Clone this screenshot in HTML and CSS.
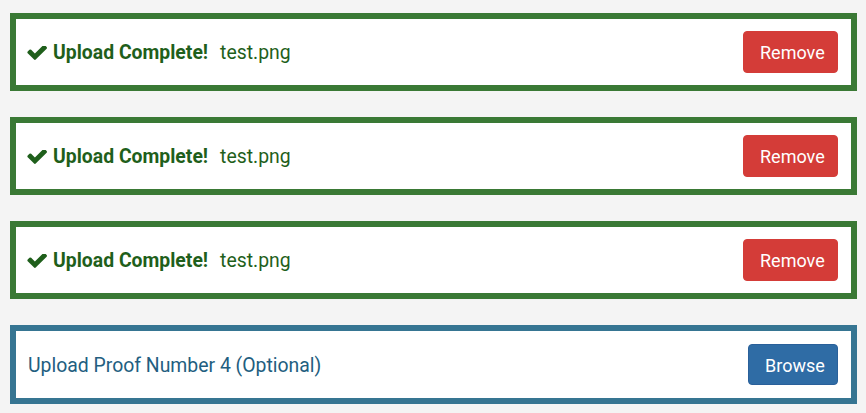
FILE: index.html
```html
<!DOCTYPE html>
<html>
<head>
<meta charset="utf-8">
<link rel="stylesheet" href="styles.css">
</head>
<body>
<div class="list">
  <div class="upload done">
    <div class="label">
      <svg class="check" viewBox="92 430 1579 1092" width="20" height="14"><path fill="currentColor" d="M1671 566q0 40-28 68l-724 724-136 136q-28 28-68 28t-68-28l-136-136-362-362q-28-28-28-68t28-68l136-136q28-28 68-28t68 28l294 295 656-657q28-28 68-28t68 28l136 136q28 28 28 68z"/></svg>
      <strong>Upload Complete!</strong>
      <span class="file">test.png</span>
    </div>
    <button class="btn btn-remove">Remove</button>
  </div>
  <div class="upload done">
    <div class="label">
      <svg class="check" viewBox="92 430 1579 1092" width="20" height="14"><path fill="currentColor" d="M1671 566q0 40-28 68l-724 724-136 136q-28 28-68 28t-68-28l-136-136-362-362q-28-28-28-68t28-68l136-136q28-28 68-28t68 28l294 295 656-657q28-28 68-28t68 28l136 136q28 28 28 68z"/></svg>
      <strong>Upload Complete!</strong>
      <span class="file">test.png</span>
    </div>
    <button class="btn btn-remove">Remove</button>
  </div>
  <div class="upload done">
    <div class="label">
      <svg class="check" viewBox="92 430 1579 1092" width="20" height="14"><path fill="currentColor" d="M1671 566q0 40-28 68l-724 724-136 136q-28 28-68 28t-68-28l-136-136-362-362q-28-28-28-68t28-68l136-136q28-28 68-28t68 28l294 295 656-657q28-28 68-28t68 28l136 136q28 28 28 68z"/></svg>
      <strong>Upload Complete!</strong>
      <span class="file">test.png</span>
    </div>
    <button class="btn btn-remove">Remove</button>
  </div>
  <div class="upload pending">
    <div class="label">Upload Proof Number 4 (Optional)</div>
    <button class="btn btn-browse">Browse</button>
  </div>
</div>
</body>
</html>
```
FILE: styles.css
```css
html, body {
  margin: 0;
  padding: 0;
  background: #f4f4f4;
}
body {
  font-family: Roboto, "Liberation Sans", sans-serif;
  font-size: 18px;
}
.list {
  display: flex;
  flex-direction: column;
  gap: 26px;
  padding: 13px 9px 0 10px;
}
.upload {
  display: flex;
  align-items: center;
  justify-content: space-between;
  background: #fff;
  border: 6px solid #3a7935;
  height: 66px;
  padding: 0 13px 0 11px;
}
.upload.pending {
  border-color: #367592;
  height: 67px;
}
.label {
  display: flex;
  align-items: center;
  color: #1f5f1b;
  font-size: 19.4px;
  line-height: 1;
  padding-top: 2px;
}
.pending .label {
  color: #225e80;
  padding-left: 1px;
}
.check {
  margin: 0 6px 1px 0;
  color: #1f5f1b;
}
.label strong {
  font-weight: 700;
  margin-right: 12px;
}
.btn {
  font-family: Roboto, "Liberation Sans", sans-serif;
  font-size: 18px;
  line-height: 26px;
  padding: 8px 16px;
  border: 1px solid transparent;
  border-radius: 4px;
  color: #fff;
}
.btn-remove {
  background: #d43c38;
  border-color: #d43c38;
  height: 42px;
  width: 95px;
}
.btn-browse {
  background: #2f6ca5;
  border-color: #2a609a;
  height: 41px;
  width: 90px;
}
```
